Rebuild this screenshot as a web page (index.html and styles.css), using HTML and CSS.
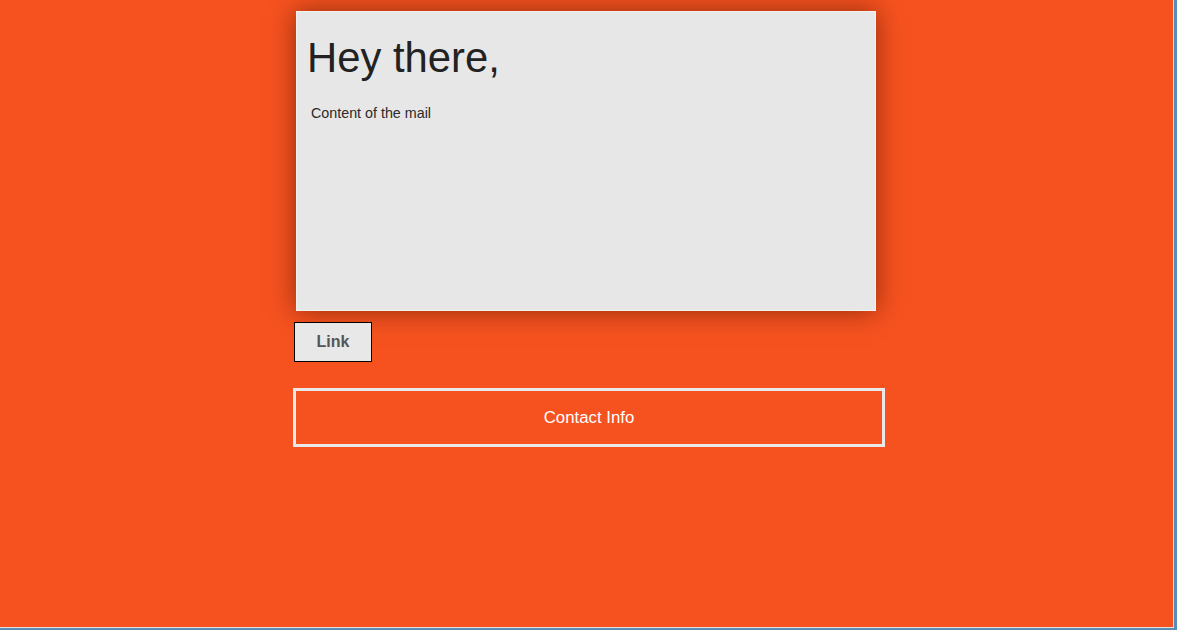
FILE: index.html
```html
<!DOCTYPE html>
<html>
<head>
<meta charset="utf-8">
<link rel="stylesheet" href="styles.css">
</head>
<body>
<div class="frame">
  <div class="page">
    <div class="mail">
      <h1 class="mail-title">Hey there,</h1>
      <p class="mail-body">Content of the mail</p>
    </div>
    <a class="link-btn">Link</a>
    <div class="contact">Contact Info</div>
  </div>
</div>
</body>
</html>
```
FILE: styles.css
```css
html, body {
  margin: 0;
  padding: 0;
  background: #5a8cba;
  height: 100%;
  overflow: hidden;
}
.frame {
  width: 1173px;
  height: 627px;
  background: #f5521f;
  border-right: 1px solid #e8e0dc;
  border-bottom: 1px solid #e8e0dc;
  font-family: "Liberation Sans", Arial, sans-serif;
  overflow: hidden;
}
.page {
  width: 592px;
  margin-left: 293px;
  padding-top: 11px;
  display: flex;
  flex-direction: column;
  align-items: flex-start;
}
.mail {
  margin-left: 3px;
  width: 578px;
  height: 298px;
  background: #e7e7e7;
  border: 1px solid #f4f2f0;
  box-shadow: 0 0 24px rgba(80, 20, 0, 0.6);
  box-sizing: content-box;
}
.mail-title {
  margin: 22px 0 0 10px;
  font-size: 41.8px;
  font-weight: normal;
  line-height: 48px;
  color: #222;
}
.mail-body {
  margin: 23px 0 0 14px;
  font-size: 14.3px;
  line-height: 16px;
  color: #2a2a2a;
}
.link-btn {
  margin: 11px 0 0 1px;
  width: 76px;
  height: 38px;
  border: 1px solid #000;
  background: #e8e8e8;
  color: #555;
  font-weight: bold;
  font-size: 16px;
  display: flex;
  align-items: center;
  justify-content: center;
}
.contact {
  margin-top: 26px;
  width: 586px;
  height: 53px;
  border: 3px solid #e9e9e9;
  color: #fff;
  font-size: 16.8px;
  display: flex;
  align-items: center;
  justify-content: center;
}
```
